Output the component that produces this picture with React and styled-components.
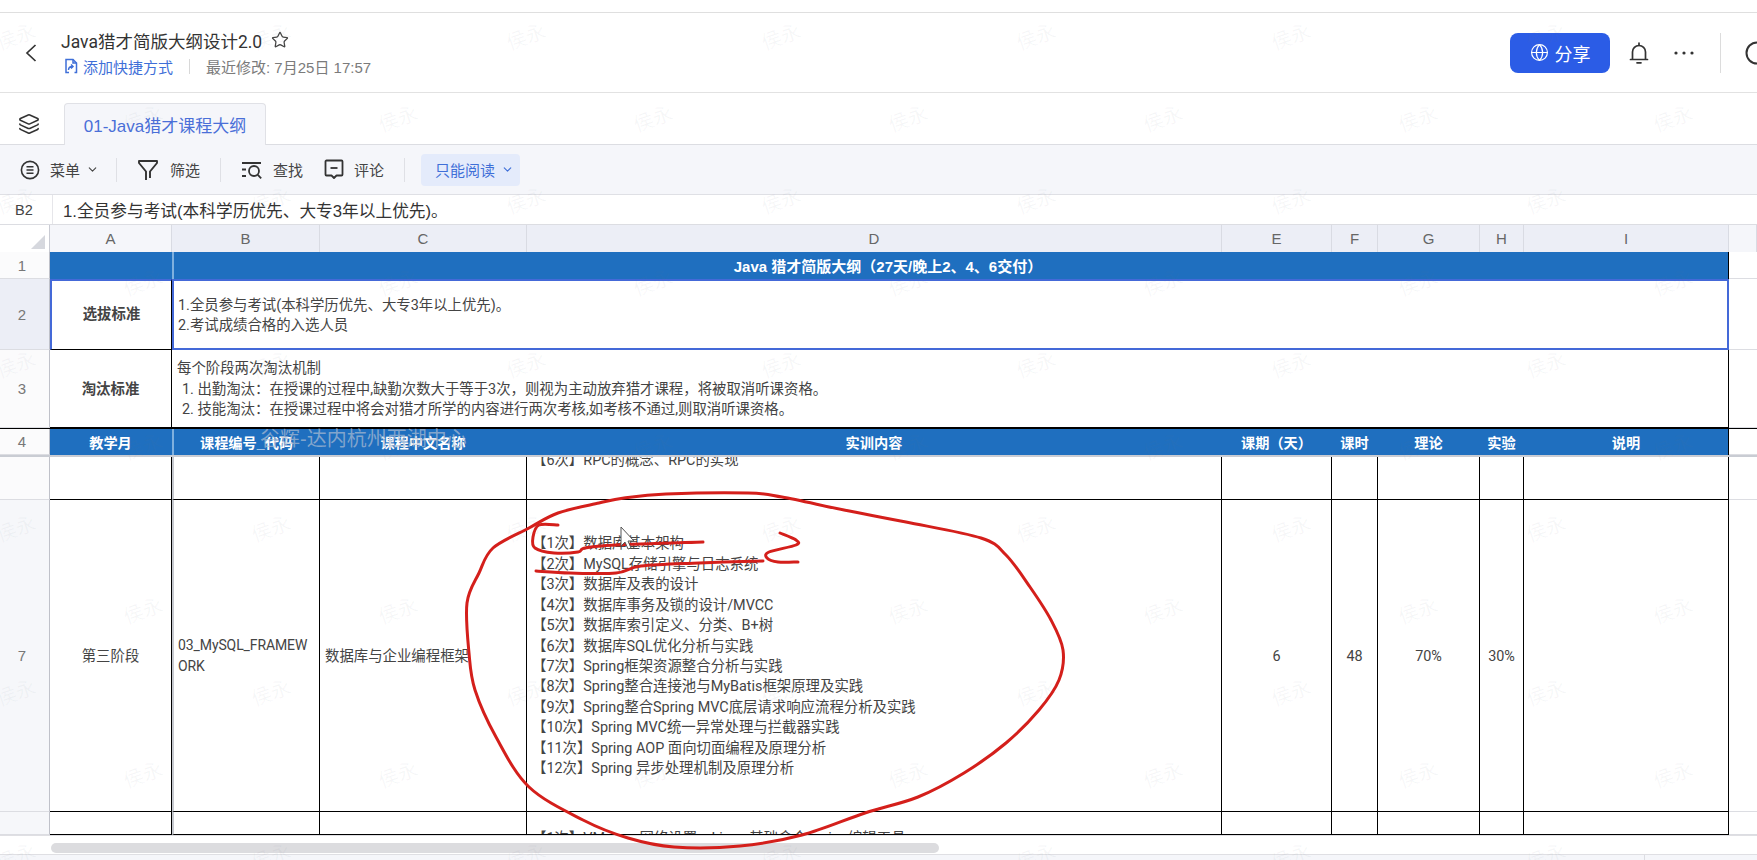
import React from 'react'
import styled, { createGlobalStyle } from 'styled-components'
import { ChevronDown, Star, Layers, Globe } from 'lucide-react'

const FONT = '"Liberation Sans", "Noto Sans CJK SC", sans-serif'
const CELL_FONT = 'Roboto, "Noto Sans CJK SC", sans-serif'
const TRACKS = '50px 122px 148px 207px 695px 110px 46px 102px 44px 205px 28px'
const BLUE = '#1f6fbf'
const SELECT = '#4469d8'

const GlobalStyle = createGlobalStyle`
  html, body {
    margin: 0;
    background: #fff;
    overflow: hidden;
  }
  * {
    box-sizing: border-box;
  }
`

const Page = styled.div`
  position: relative;
  width: 1757px;
  height: 860px;
  overflow: hidden;
  display: flex;
  flex-direction: column;
  font-family: ${FONT};
  color: #333;
`

const TopStrip = styled.div`
  height: 13px;
  flex-shrink: 0;
  border-bottom: 1px solid #dfdfdf;
`

const Header = styled.header`
  height: 80px;
  flex-shrink: 0;
  display: flex;
  align-items: center;
  padding-left: 25px;
  border-bottom: 1px solid #e2e2e2;
`

const BackButton = styled.div`
  width: 12px;
  height: 18px;
  margin-right: 24px;
  display: flex;
  color: #333;
`

const TitleBlock = styled.div`
  display: flex;
  flex-direction: column;
  gap: 5px;
  flex: 1;
`

const TitleRow = styled.div`
  display: flex;
  align-items: center;
  gap: 9px;
  height: 22px;
  font-family: ${CELL_FONT};
  font-size: 17.5px;
  color: #333;
`

const MetaRow = styled.div`
  display: flex;
  align-items: center;
  height: 20px;
  margin-left: 3px;
  font-size: 15px;
  color: #7b7b7b;
`

const ShortcutLink = styled.span`
  display: flex;
  align-items: center;
  gap: 5px;
  color: #3f6fd8;
`

const MetaDivider = styled.span`
  width: 1px;
  height: 15px;
  margin: 0 16px;
  background: #d8d8d8;
`

const ShareButton = styled.button`
  width: 100px;
  height: 40px;
  border: 0;
  border-radius: 8px;
  display: flex;
  align-items: center;
  justify-content: center;
  gap: 6px;
  background: #2b5ce6;
  color: #fff;
  font-family: ${FONT};
  font-size: 18px;
`

const HeaderIcon = styled.div`
  width: 24px;
  height: 24px;
  margin-left: ${p => p.$ml}px;
  flex-shrink: 0;
  color: #333;
`

const HeaderDivider = styled.span`
  width: 1px;
  height: 40px;
  margin-left: 24px;
  background: #dcdcdc;
`

const SearchClip = styled.div`
  width: 12px;
  height: 24px;
  margin-left: 24px;
  overflow: hidden;
  color: #333;
`

const TabRow = styled.div`
  height: 52px;
  flex-shrink: 0;
  display: flex;
  align-items: flex-end;
  padding-left: 18px;
  border-bottom: 1px solid #dcdde2;
`

const LayerIcon = styled.div`
  width: 22px;
  height: 22px;
  margin: 0 24px 9px 0;
  color: #333;
`

const Tab = styled.div`
  width: 202px;
  height: 42px;
  margin-bottom: -1px;
  display: flex;
  align-items: center;
  justify-content: center;
  background: #f5f6fa;
  border: 1px solid #e0e1e6;
  border-bottom: 0;
  border-radius: 4px 4px 0 0;
  color: #4a6fd8;
  font-size: 17px;
`

const Toolbar = styled.div`
  height: 50px;
  flex-shrink: 0;
  display: flex;
  align-items: center;
  padding-left: 20px;
  background: #f5f6fa;
  border-bottom: 1px solid #dfe0e5;
  font-size: 15px;
  color: #444;
`

const ToolItem = styled.div`
  display: flex;
  align-items: center;
  gap: ${p => p.$gap || 10}px;
  margin-left: ${p => p.$ml || 0}px;
`

const ToolCaret = styled(ChevronDown)`
  margin-left: 6px;
`

const ToolDivider = styled.span`
  width: 1px;
  height: 24px;
  margin: 0 20px 0 ${p => p.$left || 20}px;
  background: #dfe0e5;
`

const ReadOnlyPill = styled.div`
  width: 99px;
  height: 32px;
  margin-left: -4px;
  padding-left: 14px;
  display: flex;
  align-items: center;
  gap: 6px;
  border-radius: 4px;
  background: #e4ebfb;
  color: #3f6fd8;
`

const FormulaBar = styled.div`
  height: 30px;
  flex-shrink: 0;
  display: flex;
  align-items: center;
  border-bottom: 1px solid #dcdde2;
`

const NameBox = styled.div`
  width: 53px;
  height: 100%;
  display: flex;
  align-items: center;
  padding-left: 15px;
  border-right: 1px solid #e6e6ea;
  font-size: 14.5px;
  color: #444;
`

const FormulaText = styled.div`
  padding-left: 10px;
  font-size: 16.7px;
  color: #333;
`

const Grid = styled.div`
  display: grid;
  grid-template-columns: ${TRACKS};
  height: ${p => p.$h}px;
  flex-shrink: 0;
`

const ColHead = styled.div`
  display: flex;
  align-items: center;
  justify-content: center;
  border-right: 1px solid #d9dbe3;
  background: ${p => (p.$active ? '#eceef6' : '#f5f6fa')};
  font-size: 15px;
  color: #666;
`

const Corner = styled.div`
  position: relative;
  background: #fff;
  border-right: 1px solid #c9cbd3;
  &::after {
    content: '';
    position: absolute;
    right: 4px;
    bottom: 3px;
    border-style: solid;
    border-width: 0 0 14px 14px;
    border-color: transparent transparent #d6d8de transparent;
  }
`

const RowHead = styled.div`
  display: flex;
  align-items: center;
  justify-content: center;
  padding-right: 5px;
  border-right: 1px solid #bfc1c9;
  border-bottom: 1px solid #dcdde2;
  background: ${p => (p.$active ? '#eceef6' : p.$pale ? '#f6f7fa' : '#fbfbfc')};
  font-size: 15px;
  color: #777;
`

const Spare = styled.div`
  border-bottom: 1px solid #dcdde2;
  background: #fff;
`

const Cell = styled.div`
  display: flex;
  flex-direction: column;
  align-items: ${p => (p.$center ? 'center' : 'flex-start')};
  justify-content: center;
  min-width: 0;
  padding: 3px ${p => (p.$center ? 0 : 5)}px 0 ${p => (p.$center ? 0 : p.$freeze ? 4 : 5)}px;
  grid-column: ${p => p.$span || 'auto'};
  border-right: 1px solid #000;
  border-bottom: 1px solid #000;
  border-left: ${p => (p.$freeze ? '2px solid #c6c9cf' : '0')};
  font-family: ${CELL_FONT};
  font-size: 14.4px;
  line-height: 20.45px;
  font-weight: ${p => (p.$bold ? 700 : 400)};
  color: #444;
`

const BlueCell = styled.div`
  display: flex;
  align-items: center;
  justify-content: center;
  grid-column: ${p => p.$span || 'auto'};
  padding-right: ${p => p.$shift || 0}px;
  background: ${BLUE};
  border-right: 1px solid ${p => (p.$edge ? '#000' : BLUE)};
  border-left: ${p => (p.$freeze ? '2px solid #7fb0de' : '0')};
  font-size: ${p => (p.$big ? 15 : 14.2)}px;
  font-weight: 700;
  color: #fff;
`

const HeaderRow4 = styled(Grid)`
  position: relative;
  z-index: 2;
  border-top: 1px solid #000;
  box-shadow: 0 2px 0 #c9ccd3;
`

const SelectedLabel = styled(Cell)`
  padding-top: 1px;
  border-top: 2px solid ${SELECT};
  border-left: 2px solid ${SELECT};
`

const SelectedCell = styled(Cell)`
  border: 2px solid ${SELECT};
  padding-left: 4px;
`

const ReasonCell = styled(Cell)`
  padding-left: 5px;
`

const ListLine = styled.div`
  padding-left: ${p => (p.$indent ? 5 : 0)}px;
`

const CodeLine = styled.div`
  white-space: nowrap;
  font-size: 14px;
  letter-spacing: -0.1px;
`

const CodeCell = styled(Cell)`
  padding-top: 0;
`

const ScrollArea = styled.div`
  height: 380px;
  flex-shrink: 0;
  overflow: hidden;
`

const ClippedCell = styled(Cell)`
  justify-content: flex-start;
  padding-top: ${p => p.$top}px;
  overflow: hidden;
  white-space: nowrap;
`

const RaisedLine = styled.div`
  margin-top: -4px;
`

const ScrollBand = styled.div`
  height: 20px;
  flex-shrink: 0;
  padding: 7px 0 0 51px;
  border-top: 1px solid #dfdfe3;
  border-bottom: 1px solid #dfdfe3;
`

const ScrollThumb = styled.div`
  width: 888px;
  height: 10px;
  border-radius: 5px;
  background: #dcdcdf;
`

const StatusBar = styled.div`
  flex: 1;
  display: flex;
  justify-content: flex-end;
  padding-right: 112px;
  background: #f5f6fa;
`

const StatusTick = styled.span`
  width: 1px;
  background: #dcdde2;
`

const WatermarkLayer = styled.div`
  position: absolute;
  inset: -6px 0 0 0;
  pointer-events: none;
  z-index: 3;
`

const WatermarkRow = styled.div`
  display: flex;
  height: 82px;
  margin-left: ${p => (p.$odd ? 15 : -112)}px;
`

const Watermark = styled.span`
  width: 255px;
  flex-shrink: 0;
  display: flex;
  align-items: center;
  justify-content: center;
  transform: rotate(-20deg);
  font-size: 20px;
  color: rgba(110, 120, 140, 0.06);
`

const Stamp = styled.div`
  position: absolute;
  left: 260px;
  top: 423px;
  z-index: 4;
  font-size: 20px;
  white-space: nowrap;
  color: rgba(175, 190, 210, 0.7);
`

const Ink = styled.svg`
  position: absolute;
  inset: 0;
  z-index: 5;
  pointer-events: none;
`

const LOOP = [
  [529, 528], [558, 513], [599, 503], [624, 498], [666, 494], [748, 493], [782, 497], [844, 510],
  [906, 522], [981, 538], [1006, 555], [1030, 587], [1051, 620], [1063, 650], [1059, 680], [1039, 710],
  [1006, 743], [964, 773], [918, 797], [865, 813], [802, 835], [740, 846], [674, 847], [628, 838],
  [583, 820], [529, 787], [496, 737], [475, 690], [469, 653], [467, 603], [479, 573], [493, 548]
]
const STROKE_1 = [
  [558, 525], [539, 525], [533, 537], [535, 548], [554, 553], [578, 552], [585, 548], [616, 545], [703, 542]
]
const STROKE_2 = [[536, 571], [570, 573], [616, 573], [641, 566], [699, 563], [763, 561]]
const STROKE_3 = [[780, 533], [796, 540], [796, 545], [769, 552], [767, 558], [778, 562], [798, 562]]

// catmull-rom through the traced points, so the hand drawn lines keep their reach
const trace = (pts, closed) => {
  const at = i => (closed ? pts[(i + pts.length) % pts.length] : pts[Math.max(0, Math.min(pts.length - 1, i))])
  const count = closed ? pts.length : pts.length - 1
  let d = `M${pts[0][0]} ${pts[0][1]}`
  for (let i = 0; i < count; i++) {
    const [p0, p1, p2, p3] = [at(i - 1), at(i), at(i + 1), at(i + 2)]
    const c1 = [p1[0] + (p2[0] - p0[0]) / 6, p1[1] + (p2[1] - p0[1]) / 6]
    const c2 = [p2[0] - (p3[0] - p1[0]) / 6, p2[1] - (p3[1] - p1[1]) / 6]
    d += ` C${c1[0]} ${c1[1]} ${c2[0]} ${c2[1]} ${p2[0]} ${p2[1]}`
  }
  return d
}

const ShortcutIcon = () => (
  <svg width="14" height="16" viewBox="0 0 14 16" fill="none" stroke="#3f6fd8" strokeWidth="1.5">
    <path d="M5 14.5H2V1.5h7l3.5 3.5v9.5h-2" />
    <path d="M9 1.5V5h3.5" />
    <path d="M4.5 12c0-2.5 1.5-3.5 4-3.5M7 6.5l2 2-2 2" />
  </svg>
)

const MenuIcon = () => (
  <svg width="20" height="20" viewBox="0 0 20 20" fill="none" stroke="#333" strokeWidth="1.6">
    <circle cx="10" cy="10" r="8.6" />
    <path d="M6.5 6.8h7M6.5 10h7M6.5 13.2h7" />
  </svg>
)

const FilterIcon = () => (
  <svg width="22" height="22" viewBox="0 0 22 22" fill="none" stroke="#333" strokeWidth="1.9">
    <path d="M9 21V12.5L2 4V2h18v2l-7 8.5V19" strokeLinejoin="round" />
  </svg>
)

const FindIcon = () => (
  <svg width="22" height="20" viewBox="0 0 22 20" fill="none" stroke="#333" strokeWidth="1.8">
    <path d="M1 3h19M1 9.5h4M1 16h4" />
    <circle cx="13" cy="11" r="5" />
    <path d="M16.8 14.8l3.4 3.6" />
  </svg>
)

const CommentIcon = () => (
  <svg width="20" height="21" viewBox="0 0 20 21" fill="none" stroke="#333" strokeWidth="1.8">
    <path d="M2.5 1.5h15a1 1 0 0 1 1 1v13a1 1 0 0 1-1 1h-5L10 19l-2.5-2.5h-5a1 1 0 0 1-1-1v-13a1 1 0 0 1 1-1z" strokeLinejoin="round" />
    <path d="M6.5 9h7" />
  </svg>
)

const BellIcon = () => (
  <svg width="24" height="24" viewBox="0 0 24 24" fill="none" stroke="#333" strokeWidth="1.7">
    <path d="M3.5 18.5h17M5.5 18.5V11a6.5 6.5 0 0 1 13 0v7.5" strokeLinecap="round" />
    <path d="M12 2v2.3M10 21.8h4" strokeLinecap="round" />
  </svg>
)

const DotsIcon = () => (
  <svg width="24" height="24" viewBox="0 0 24 24" fill="#333">
    <circle cx="4" cy="12" r="1.6" />
    <circle cx="12" cy="12" r="1.6" />
    <circle cx="20" cy="12" r="1.6" />
  </svg>
)

const LINES = [
  '【1次】数据库基本架构',
  '【2次】MySQL存储引擎与日志系统',
  '【3次】数据库及表的设计',
  '【4次】数据库事务及锁的设计/MVCC',
  '【5次】数据库索引定义、分类、B+树',
  '【6次】数据库SQL优化分析与实践',
  '【7次】Spring框架资源整合分析与实践',
  '【8次】Spring整合连接池与MyBatis框架原理及实践',
  '【9次】Spring整合Spring MVC底层请求响应流程分析及实践',
  '【10次】Spring MVC统一异常处理与拦截器实践',
  '【11次】Spring AOP 面向切面编程及原理分析',
  '【12次】Spring 异步处理机制及原理分析'
]

const COLUMNS = ['B', 'C', 'D', 'E', 'F', 'G', 'H', 'I']
const TITLES = ['课程编号_代码', '课程中文名称', '实训内容', '课期（天）', '课时', '理论', '实验', '说明']
const WATERMARK_ROWS = Array.from({ length: 11 }, (_, i) => i)
const WATERMARK_COLS = Array.from({ length: 8 }, (_, i) => i)

const EmptyCells = () => (
  <>
    <Cell />
    <Cell $freeze />
    <Cell />
  </>
)

const App = () => (
  <Page>
    <GlobalStyle />
    <TopStrip />
    <Header>
      <BackButton>
        <svg width="12" height="18" viewBox="0 0 12 18" fill="none" stroke="#333" strokeWidth="1.7">
          <path d="M10.5 1L2 9l8.500 8" />
        </svg>
      </BackButton>
      <TitleBlock>
        <TitleRow>
          Java猎才简版大纲设计2.0
          <Star size={18} strokeWidth={1.7} color="#444" />
        </TitleRow>
        <MetaRow>
          <ShortcutLink><ShortcutIcon />添加快捷方式</ShortcutLink>
          <MetaDivider />
          最近修改: 7月25日 17:57
        </MetaRow>
      </TitleBlock>
      <ShareButton><Globe size={19} strokeWidth={1.5} />分享</ShareButton>
      <HeaderIcon $ml={17}><BellIcon /></HeaderIcon>
      <HeaderIcon $ml={21}><DotsIcon /></HeaderIcon>
      <HeaderDivider />
      <SearchClip>
        <svg width="24" height="24" viewBox="0 0 24 24" fill="none" stroke="#333" strokeWidth="2">
          <circle cx="12" cy="12" r="10.5" />
        </svg>
      </SearchClip>
    </Header>
    <TabRow>
      <LayerIcon><Layers size={22} strokeWidth={1.7} /></LayerIcon>
      <Tab>01-Java猎才课程大纲</Tab>
    </TabRow>
    <Toolbar>
      <ToolItem $gap={10}>
        <MenuIcon />
        <span>菜单</span>
      </ToolItem>
      <ToolCaret size={13} strokeWidth={2} />
      <ToolDivider $left={17} />
      <ToolItem $gap={11}><FilterIcon /><span>筛选</span></ToolItem>
      <ToolDivider />
      <ToolItem><FindIcon /><span>查找</span></ToolItem>
      <ToolItem $ml={21}><CommentIcon /><span>评论</span></ToolItem>
      <ToolDivider />
      <ReadOnlyPill>只能阅读<ChevronDown size={13} strokeWidth={2} /></ReadOnlyPill>
    </Toolbar>
    <FormulaBar>
      <NameBox>B2</NameBox>
      <FormulaText>1.全员参与考试(本科学历优先、大专3年以上优先)。</FormulaText>
    </FormulaBar>

    <Grid $h={27}>
      <Corner />
      <ColHead>A</ColHead>
      {COLUMNS.map(c => <ColHead key={c} $active>{c}</ColHead>)}
      <ColHead />
    </Grid>
    <Grid $h={27}>
      <RowHead>1</RowHead>
      <BlueCell />
      <BlueCell $span="3 / 11" $freeze $edge $big $shift={126}>Java 猎才简版大纲（27天/晚上2、4、6交付）</BlueCell>
      <Spare />
    </Grid>
    <Grid $h={71}>
      <RowHead $active>2</RowHead>
      <SelectedLabel $center $bold>选拔标准</SelectedLabel>
      <SelectedCell $span="3 / 11">
        <div>1.全员参与考试(本科学历优先、大专3年以上优先)。</div>
        <div>2.考试成绩合格的入选人员</div>
      </SelectedCell>
      <Spare />
    </Grid>
    <Grid $h={78}>
      <RowHead>3</RowHead>
      <Cell $center $bold>淘汰标准</Cell>
      <ReasonCell $span="3 / 11">
        <div>每个阶段两次淘汰机制</div>
        <ListLine $indent>1. 出勤淘汰：在授课的过程中,缺勤次数大于等于3次，则视为主动放弃猎才课程，将被取消听课资格。</ListLine>
        <ListLine $indent>2. 技能淘汰：在授课过程中将会对猎才所学的内容进行两次考核,如考核不通过,则取消听课资格。</ListLine>
      </ReasonCell>
      <Spare />
    </Grid>
    <HeaderRow4 $h={27}>
      <RowHead>4</RowHead>
      <BlueCell>教学月</BlueCell>
      {TITLES.map((t, i) => (
        <BlueCell key={t} $freeze={i === 0} $edge={i === TITLES.length - 1}>{t}</BlueCell>
      ))}
      <Spare />
    </HeaderRow4>

    <ScrollArea>
      <Grid $h={45}>
        <RowHead />
        <EmptyCells />
        <ClippedCell $top={0}>
          <RaisedLine>【6次】RPC的概念、RPC的实现</RaisedLine>
        </ClippedCell>
        <Cell /><Cell /><Cell /><Cell /><Cell />
        <Spare />
      </Grid>
      <Grid $h={312}>
        <RowHead $pale>7</RowHead>
        <Cell $center>第三阶段</Cell>
        <CodeCell $freeze>
          <CodeLine>03_MySQL_FRAMEW</CodeLine>
          <CodeLine>ORK</CodeLine>
        </CodeCell>
        <Cell>数据库与企业编程框架</Cell>
        <Cell>{LINES.map(l => <div key={l}>{l}</div>)}</Cell>
        <Cell $center>6</Cell>
        <Cell $center>48</Cell>
        <Cell $center>70%</Cell>
        <Cell $center>30%</Cell>
        <Cell />
        <Spare />
      </Grid>
      <Grid $h={23}>
        <RowHead $pale />
        <EmptyCells />
        <ClippedCell $top={17}>【1次】VMware 网络设置、Linux 基础命令、vim 编辑工具</ClippedCell>
        <Cell /><Cell /><Cell /><Cell /><Cell />
        <Spare />
      </Grid>
    </ScrollArea>
    <ScrollBand><ScrollThumb /></ScrollBand>
    <StatusBar><StatusTick /></StatusBar>

    <WatermarkLayer>
      {WATERMARK_ROWS.map(r => (
        <WatermarkRow key={r} $odd={r % 2 === 1}>
          {WATERMARK_COLS.map(c => <Watermark key={c}>侯永</Watermark>)}
        </WatermarkRow>
      ))}
    </WatermarkLayer>
    <Stamp>谷辉-达内杭州西湖中心</Stamp>

    <Ink width="1757" height="860" viewBox="0 0 1757 860" fill="none">
      <g stroke="#d41f1b" strokeWidth="3" strokeLinecap="round" strokeLinejoin="round">
        <path d={trace(LOOP, true)} />
        <path d={trace(STROKE_1)} />
        <path d={trace(STROKE_2)} />
        <path d={trace(STROKE_3)} />
      </g>
      <path d="M621 527v19l4-4 3 7 3-1-3-7h6z" fill="#fff" stroke="#555" strokeWidth="1" />
    </Ink>
  </Page>
)

export default App
